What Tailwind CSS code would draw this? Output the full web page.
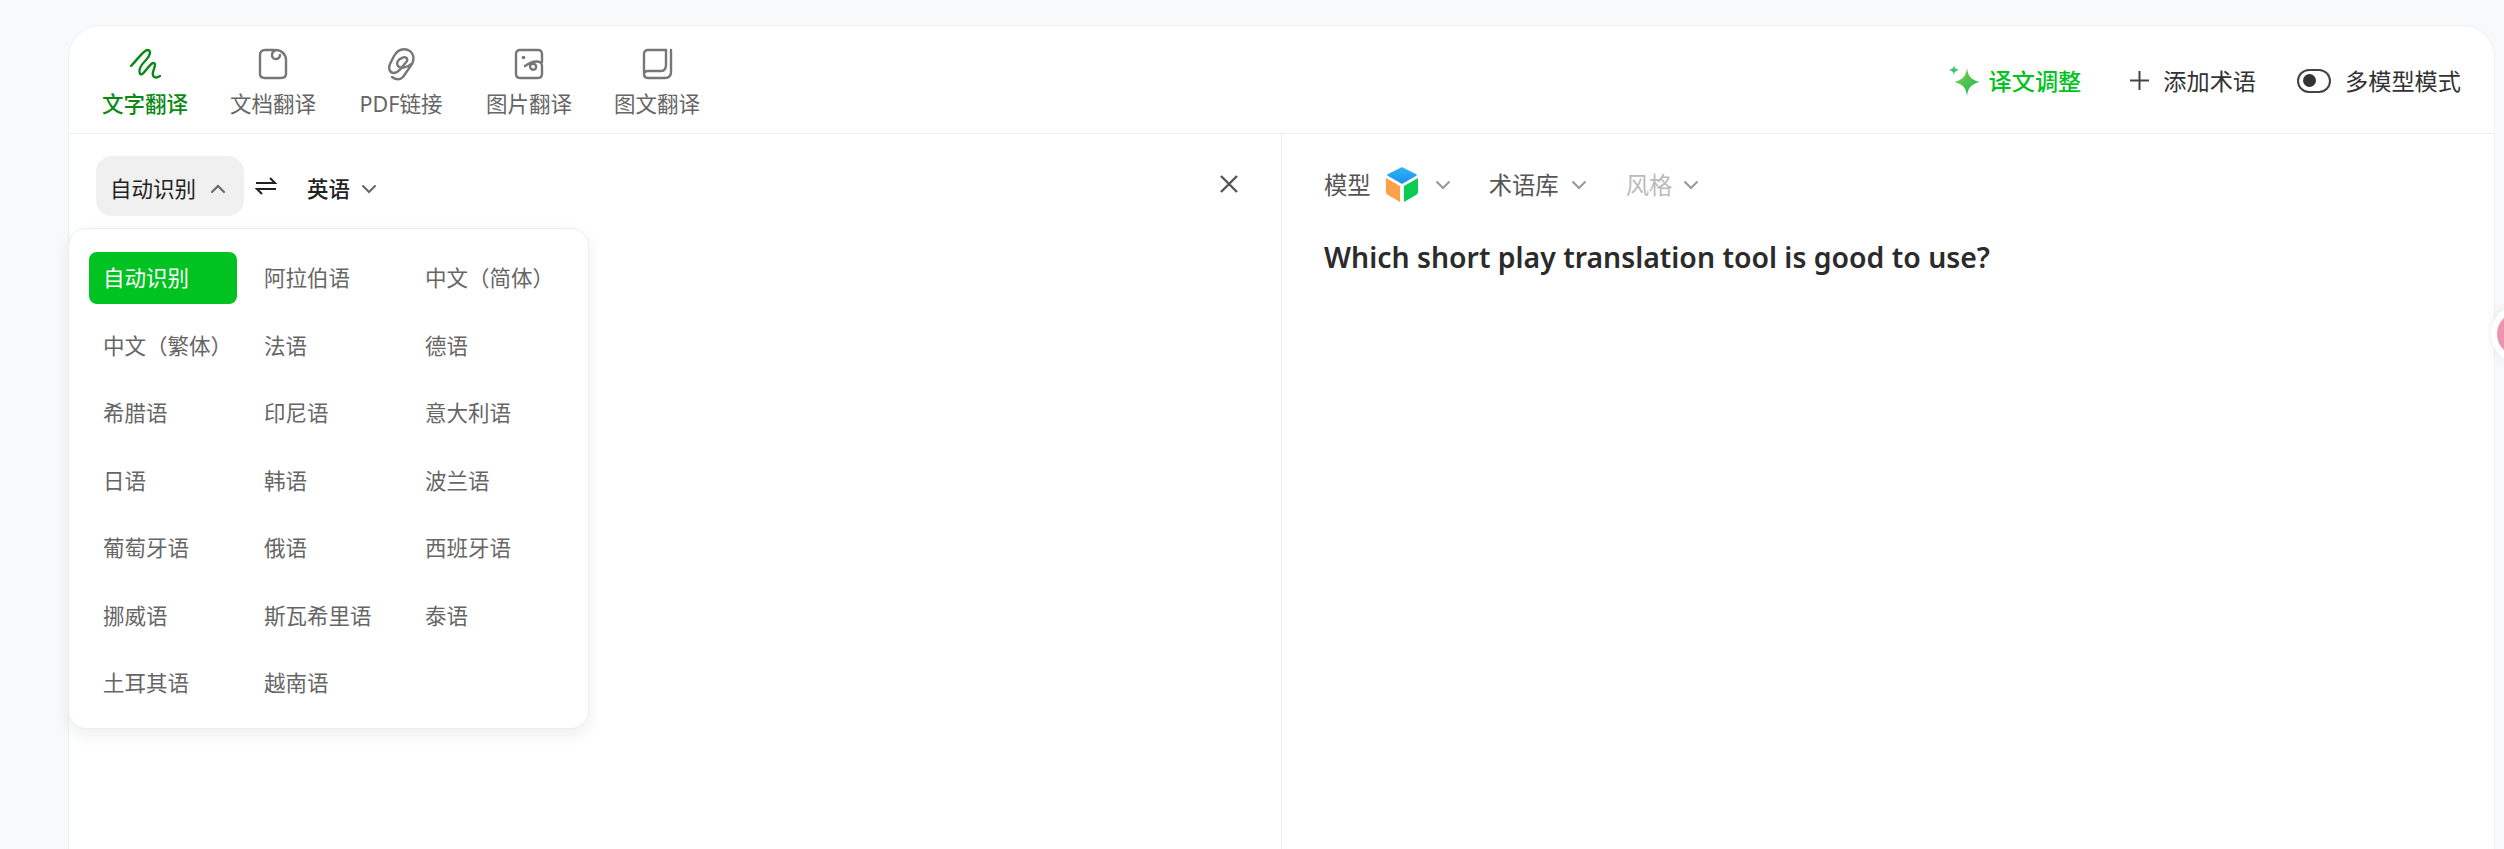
<!DOCTYPE html>
<html lang="zh-CN">
<head>
    <meta charset="UTF-8">
    <title>文字翻译</title>
    <script src="https://cdn.jsdelivr.net/npm/@tailwindcss/browser@4"></script>
</head>
<body class="relative h-[849px] w-[2504px] overflow-hidden bg-[#f8f9fb] pt-[25px] font-['Noto_Sans','Noto_Sans_CJK_SC',sans-serif] text-[#2b2b2b]">

    <div class="absolute right-0 top-[304px] z-10 h-[60px] w-[16px] overflow-hidden">
        <div class="ml-[3px] flex h-[60px] w-[60px] items-center rounded-full bg-white pl-[6px] shadow-[0_0_12px_rgba(0,0,0,0.08)]">
            <div class="h-[44px] w-[44px] rounded-full bg-[#ee93ad]"></div>
        </div>
    </div>

    <div class="relative ml-[68px] h-[824px] w-[2427px] rounded-t-[32px] border border-b-0 border-[#eef0f2] bg-white">
        <!-- top bar -->
        <div class="flex h-[108px] items-start justify-between border-b border-[#eeeeee] pl-[33px] pr-[33px]">
            <div class="flex gap-[42px] pt-[20px] text-[21.5px] leading-[28px] text-[#666666]">
                <div class="flex w-[86px] flex-col items-center gap-[8px] font-medium text-[#0a8a14]">
                    <svg class="h-[36px] w-[36px]" viewBox="0 0 36 36" fill="none" stroke="#0a8a14" stroke-width="2.4" stroke-linecap="round" stroke-linejoin="round"><path d="M4 20 C10 14 16 5 20 4 C25 4 23 10 19 14 C15 18 11 24 13 28 C16 31 22 18 26 17 C30 17 27 22 26 26 C25 31 28 33 33 30"/></svg>
                    <span class="whitespace-nowrap">文字翻译</span>
                </div>
                <div class="flex w-[86px] flex-col items-center gap-[8px]">
                    <svg class="h-[36px] w-[36px]" viewBox="0 0 36 36" fill="none" stroke="#777777" stroke-width="2.4" stroke-linecap="round" stroke-linejoin="round"><path d="M19 4 H10 Q5 4 5 9 V28 Q5 32 10 32 H26 Q31 32 31 28 V14 C31 8 26 4 21 4 C17 5 16 9 18 12 C20 14 25 13 25 9"/></svg>
                    <span class="whitespace-nowrap">文档翻译</span>
                </div>
                <div class="flex w-[86px] flex-col items-center gap-[8px]">
                    <svg class="h-[36px] w-[36px]" viewBox="0 0 36 36" fill="none" stroke="#777777" stroke-width="2.4" stroke-linecap="round" stroke-linejoin="round"><path d="M9 31 C13 34 17 34 20 31 L29 18 C32 12 30 6 25 4 C19 2 14 5 11 10 L7 18 C5 23 7 27 11 27 C14 27 17 24 20 20 L24 15 C25 12 22 10 19 12 C15 13 13 17 15 20 C17 23 24 22 28 18"/></svg>
                    <span class="whitespace-nowrap">PDF链接</span>
                </div>
                <div class="flex w-[86px] flex-col items-center gap-[8px]">
                    <svg class="h-[36px] w-[36px]" viewBox="0 0 36 36" fill="none" stroke="#777777" stroke-width="2.4" stroke-linecap="round" stroke-linejoin="round"><path d="M31 16 V8 Q31 4 27 4 H9 Q5 4 5 8 V28 Q5 32 9 32 H27 Q31 32 31 28 V20 C31 14 22 14 14 20 M19 20 C19 25 26 25 25 20 C24 17 20 17 19 20"/><circle cx="12.500" cy="11.500" r="1.800" fill="#777777" stroke="none"/></svg>
                    <span class="whitespace-nowrap">图片翻译</span>
                </div>
                <div class="flex w-[86px] flex-col items-center gap-[8px]">
                    <svg class="h-[36px] w-[36px]" viewBox="0 0 36 36" fill="none" stroke="#777777" stroke-width="2.4" stroke-linecap="round" stroke-linejoin="round"><path d="M5 26 V8 Q5 4 9 4 H27 V19 Q27 25 22 25 H9 Q5 25 5 28 Q5 32 9 32 H26 Q32 32 32 26 V4"/></svg>
                    <span class="whitespace-nowrap">图文翻译</span>
                </div>
            </div>
            <div class="flex items-center pt-[39px] text-[23.2px] leading-[30px]">
                <div class="flex items-center gap-[9px] font-medium text-[#00c322]">
                    <svg class="h-[31px] w-[31px]" viewBox="0 0 31 31"><defs><linearGradient id="star" x1="0" y1="0" x2="1" y2="1"><stop offset="0" stop-color="#8ad146"/><stop offset="1" stop-color="#0fb65c"/></linearGradient></defs><path d="M18 3 C19 11 22 15 31 17 C22 19 19 23 18 31 C17 23 14 19 5 17 C14 15 17 11 18 3 Z" fill="url(#star)"/><path d="M5 0 C5.500 3 6.500 4 10 5 C6.500 6 5.500 7 5 10 C4.500 7 3.500 6 0 5 C3.500 4 4.500 3 5 0 Z" fill="#3fc56a"/></svg>
                    <span>译文调整</span>
                </div>
                <div class="ml-[48px] flex items-center gap-[13px] text-[#333333]">
                    <svg class="h-[21px] w-[21px]" viewBox="0 0 21 21" stroke="#444444" stroke-width="2" fill="none"><path d="M10.500 1 V20 M1 10.500 H20"/></svg>
                    <span>添加术语</span>
                </div>
                <div class="ml-[41px] flex items-center gap-[14px] text-[#333333]">
                    <div class="flex h-[24px] w-[34px] items-center rounded-full border-2 border-[#444444] pl-[4px]">
                        <div class="h-[13px] w-[13px] rounded-full bg-[#333333]"></div>
                    </div>
                    <span>多模型模式</span>
                </div>
            </div>
        </div>

        <!-- panes -->
        <div class="flex">
            <div class="relative h-[716px] w-[1213px] border-r border-[#eeeeee] pl-[27px] pt-[22px]">
                <div class="flex items-center text-[21.5px] leading-[30px] text-[#222222]">
                    <div class="flex h-[60px] w-[148px] items-center gap-[13px] rounded-[16px] bg-[#f0f0f0] pl-[14px] pt-[6px]">
                        <span class="whitespace-nowrap">自动识别</span>
                        <svg class="h-[18px] w-[18px]" viewBox="0 0 18 18" fill="none" stroke="#666666" stroke-width="2" stroke-linecap="round"><path d="M3 12 L9 6 L15 12"/></svg>
                    </div>
                    <svg class="ml-[11px] h-[22px] w-[22px]" viewBox="0 0 22 22" fill="none" stroke="#222222" stroke-width="2"><path d="M1 8 H20 L15 3 M21 14 H2 L7 19"/></svg>
                    <span class="ml-[30px] pt-[6px] font-medium">英语</span>
                    <svg class="ml-[11px] mt-[6px] h-[16px] w-[16px]" viewBox="0 0 16 16" fill="none" stroke="#666666" stroke-width="2" stroke-linecap="round"><path d="M2 5 L8 11 L14 5"/></svg>
                </div>
                <svg class="absolute right-[42px] top-[40px] h-[20px] w-[20px]" viewBox="0 0 20 20" fill="none" stroke="#555555" stroke-width="2.400"><path d="M2 2 L18 18 M18 2 L2 18"/></svg>

                <!-- language dropdown -->
                <div class="absolute left-[-1px] top-[94px] z-10 grid h-[501px] w-[521px] grid-cols-[148px_148px_148px] content-start gap-x-[13px] gap-y-[15.500px] rounded-[18px] border border-[#eeeeee] bg-white pl-[20px] pt-[23px] text-[21.5px] leading-[52px] text-[#666666] shadow-[0_6px_16px_rgba(0,0,0,0.07)]">
                    <div class="h-[52px] rounded-[8px] bg-[#00c322] pl-[14px] text-white">自动识别</div>
                    <div class="h-[52px] pl-[14px]">阿拉伯语</div>
                    <div class="h-[52px] whitespace-nowrap pl-[14px]">中文（简体）</div>
                    <div class="h-[52px] whitespace-nowrap pl-[14px]">中文（繁体）</div>
                    <div class="h-[52px] pl-[14px]">法语</div>
                    <div class="h-[52px] pl-[14px]">德语</div>
                    <div class="h-[52px] pl-[14px]">希腊语</div>
                    <div class="h-[52px] pl-[14px]">印尼语</div>
                    <div class="h-[52px] pl-[14px]">意大利语</div>
                    <div class="h-[52px] pl-[14px]">日语</div>
                    <div class="h-[52px] pl-[14px]">韩语</div>
                    <div class="h-[52px] pl-[14px]">波兰语</div>
                    <div class="h-[52px] pl-[14px]">葡萄牙语</div>
                    <div class="h-[52px] pl-[14px]">俄语</div>
                    <div class="h-[52px] pl-[14px]">西班牙语</div>
                    <div class="h-[52px] pl-[14px]">挪威语</div>
                    <div class="h-[52px] pl-[14px]">斯瓦希里语</div>
                    <div class="h-[52px] pl-[14px]">泰语</div>
                    <div class="h-[52px] pl-[14px]">土耳其语</div>
                    <div class="h-[52px] pl-[14px]">越南语</div>
                </div>
            </div>

            <div class="flex-1 pl-[42px] pt-[31px]">
                <div class="flex h-[40px] items-center text-[23.33px] leading-[30px] text-[#555555]">
                    <span>模型</span>
                    <svg class="ml-[14px] h-[36px] w-[34px]" viewBox="0 0 34 36"><defs><linearGradient id="cubetop" x1="0" y1="0" x2="0" y2="1"><stop offset="0" stop-color="#2db4f5"/><stop offset="1" stop-color="#1f8ff0"/></linearGradient></defs><path d="M17 1 L31 8 L17 16 L3 8 Z" fill="url(#cubetop)" stroke="url(#cubetop)" stroke-width="1.500" stroke-linejoin="round"/><path d="M1 11 L15 19 V35 L3 28 Q1 27 1 25 Z" fill="#fba14a"/><path d="M33 11 L19 19 V35 L31 28 Q33 27 33 25 Z" fill="#0ccb55"/></svg>
                    <svg class="ml-[16px] h-[16px] w-[16px]" viewBox="0 0 16 16" fill="none" stroke="#999999" stroke-width="2" stroke-linecap="round"><path d="M2 5 L8 11 L14 5"/></svg>
                    <span class="ml-[38px]">术语库</span>
                    <svg class="ml-[12px] h-[16px] w-[16px]" viewBox="0 0 16 16" fill="none" stroke="#999999" stroke-width="2" stroke-linecap="round"><path d="M2 5 L8 11 L14 5"/></svg>
                    <span class="ml-[39px] text-[#bbbbbb]">风格</span>
                    <svg class="ml-[11px] h-[16px] w-[16px]" viewBox="0 0 16 16" fill="none" stroke="#999999" stroke-width="2" stroke-linecap="round"><path d="M2 5 L8 11 L14 5"/></svg>
                </div>
                <p class="mt-[32px] text-[28.4px] font-semibold leading-[40px] text-[#2b2b2b]">Which short play translation tool is good to use?</p>
            </div>
        </div>
    </div>
</body>
</html>
